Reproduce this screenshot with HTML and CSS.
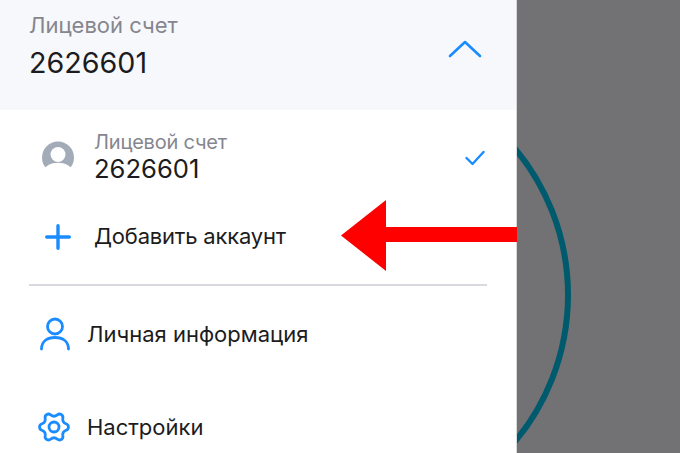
FILE: index.html
```html
<!DOCTYPE html>
<html lang="ru">
<head>
<meta charset="utf-8">
<title>Меню</title>
<link rel="stylesheet" href="styles.css">
</head>
<body>
<div class="screen">
  <aside class="panel">
    <header class="head">
      <div class="head-text">
        <div class="head-label">Лицевой счет</div>
        <div class="head-number">2626601</div>
      </div>
      <svg class="chevron" width="34" height="18" viewBox="0 0 34 18"><path d="M2 16 L17 2 L32 16" fill="none" stroke="#1a8cff" stroke-width="2.600" stroke-linecap="round" stroke-linejoin="round"/></svg>
    </header>
    <section class="account">
      <svg class="avatar" width="34" height="34" viewBox="0 0 34 34"><circle cx="17" cy="16.500" r="16" fill="#a4abb8"/><circle cx="17" cy="13.500" r="7.500" fill="#fff"/><path d="M1 31 C6 18.500 28 18.500 33 31 V34 H1 Z" fill="#fff"/></svg>
      <div class="account-text">
        <div class="account-label">Лицевой счет</div>
        <div class="account-number">2626601</div>
      </div>
      <svg class="check" width="20" height="16" viewBox="0 0 20 16"><path d="M1.500 8 L7.500 14 L18.500 2" fill="none" stroke="#1a8cff" stroke-width="2.400" stroke-linecap="round" stroke-linejoin="round"/></svg>
    </section>
    <div class="add-row">
      <svg class="plus" width="26" height="26" viewBox="0 0 26 26"><path d="M13 1.700 V24.300 M1.700 13 H24.300" fill="none" stroke="#1a8cff" stroke-width="3.400" stroke-linecap="round"/></svg>
      <span class="add-text">Добавить аккаунт</span>
    </div>
    <hr class="divider">
    <nav class="menu">
      <a class="menu-item">
        <svg class="menu-icon" width="30" height="34" viewBox="0 0 30 34"><circle cx="15" cy="9.500" r="7.500" fill="none" stroke="#1a8cff" stroke-width="2.800"/><path d="M1.500 32 C1.500 24 7.500 20.500 15 20.500 C22.500 20.500 28.500 24 28.500 32" fill="none" stroke="#1a8cff" stroke-width="2.800" stroke-linecap="round"/></svg>
        <span>Личная информация</span>
      </a>
      <a class="menu-item">
        <svg class="menu-icon" width="34" height="32" viewBox="0 0 34 32"><path d="M29.070 12.760 A3.400 3.400 0 0 1 29.070 19.240 A5 5 0 0 0 25.840 24.840 A3.400 3.400 0 0 1 20.240 28.070 A5 5 0 0 0 13.760 28.070 A3.400 3.400 0 0 1 8.160 24.840 A5 5 0 0 0 4.930 19.240 A3.400 3.400 0 0 1 4.930 12.760 A5 5 0 0 0 8.160 7.160 A3.400 3.400 0 0 1 13.760 3.930 A5 5 0 0 0 20.240 3.930 A3.400 3.400 0 0 1 25.840 7.160 A5 5 0 0 0 29.070 12.760 Z" fill="none" stroke="#1a8cff" stroke-width="2.800" stroke-linejoin="round"/><circle cx="17" cy="16" r="5" fill="none" stroke="#1a8cff" stroke-width="2.800"/></svg>
        <span>Настройки</span>
      </a>
    </nav>
    <svg class="arrow" width="178" height="72" viewBox="0 0 178 72"><path d="M0 35.500 L45 0 V27 H176 V42 H45 V71 Z" fill="#ff0000"/></svg>
  </aside>
  <div class="backdrop">
    <svg class="arc" width="163" height="453" viewBox="0 0 163 453"><circle cx="-178" cy="295" r="229" fill="none" stroke="#005a6e" stroke-width="6"/></svg>
  </div>
</div>
</body>
</html>
```
FILE: styles.css
```css
* { box-sizing: border-box; }
html, body { margin: 0; padding: 0; }
body { width: 680px; height: 453px; overflow: hidden; font-family: Inter, "Liberation Sans", sans-serif; color: #1c1c20; }
.screen { display: flex; width: 680px; height: 453px; }
.panel { position: relative; width: 517px; height: 453px; background: #fff; border-right: 1px solid #d8d8d8; }
.head { height: 110px; background: #f7f8fb; display: flex; align-items: flex-start; justify-content: space-between; padding: 13px 34px 0 29px; }
.head-label { font-size: 22px; line-height: 24px; color: #85868f; }
.head-number { margin-top: 12px; font-size: 28.700px; line-height: 28px; }
.chevron { margin-top: 27px; }
.account { display: flex; align-items: center; height: 52px; margin-top: 22px; padding: 0 31px 0 41px; }
.avatar { flex: none; margin-right: 19px; }
.account-text { flex: 1; }
.account-label { margin-top: -3px; font-size: 20px; line-height: 22px; color: #85868f; letter-spacing: -0.2px; }
.account-number { margin-top: 3px; font-size: 25.600px; line-height: 26px; }
.add-row { display: flex; align-items: center; height: 30px; margin-top: 37px; padding-left: 45px; }
.plus { flex: none; margin-top: 2px; margin-right: 23px; }
.add-text { font-size: 22px; letter-spacing: -0.2px; }
.divider { height: 2px; margin: 33px 29px 0; border: 0; background: #d9d9e0; }
.menu { display: flex; flex-direction: column; gap: 57px; margin-top: 30px; }
.menu-item { display: flex; align-items: center; height: 36px; padding-left: 40px; font-size: 22px; color: #1c1c20; }
.menu-icon { flex: none; margin-right: 17px; }
.menu-item:last-child .menu-icon { margin-left: -3px; margin-right: 16px; }
.arrow { position: absolute; left: 341px; top: 200px; }
.backdrop { flex: 1; background: #727274; }
.arc { display: block; }
```
